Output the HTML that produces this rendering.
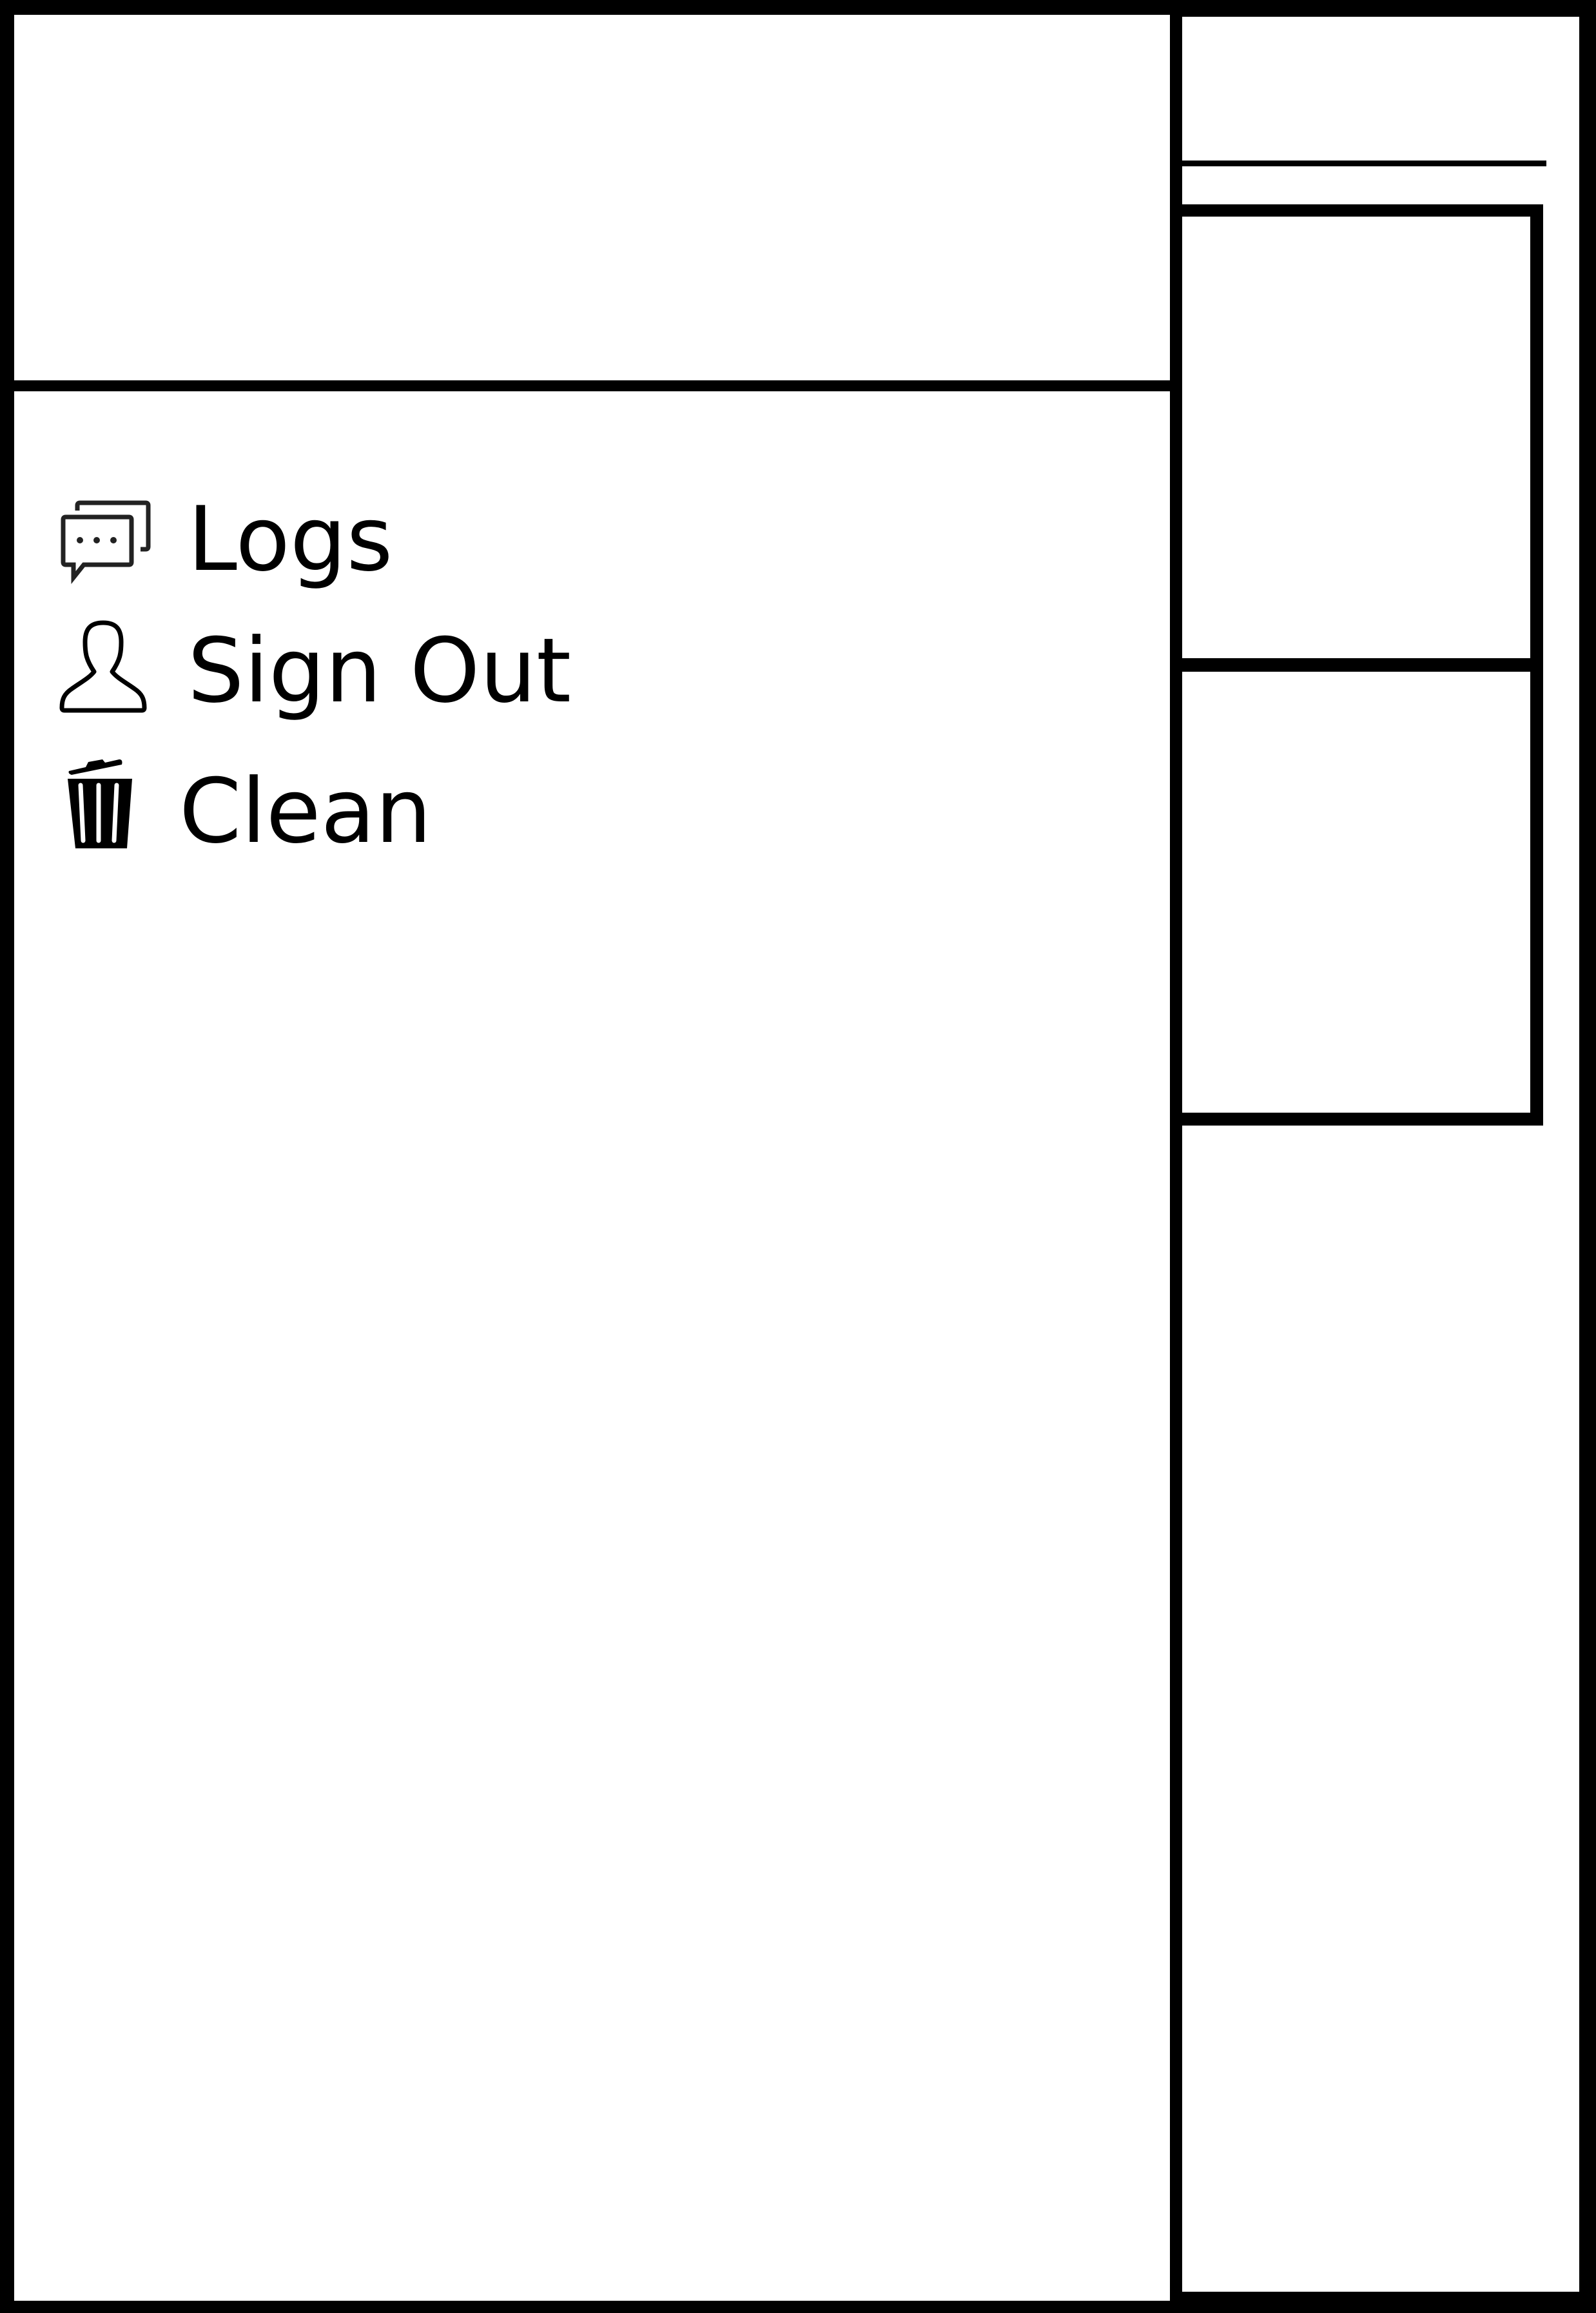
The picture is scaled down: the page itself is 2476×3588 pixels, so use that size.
<!DOCTYPE html>
<html>
<head>
<meta charset="utf-8">
<style>
html,body{margin:0;padding:0;background:#fff;}
body{width:2476px;height:3588px;position:relative;overflow:hidden;font-family:"DejaVu Sans","Liberation Sans",sans-serif;}
.b{position:absolute;background:#000;}
.t{position:absolute;font-size:138px;line-height:1;color:#000;white-space:nowrap;}
svg{position:absolute;}
</style>
</head>
<body>
<div class="b" style="left:0;top:0;width:2476px;height:23px;"></div>
<div class="b" style="left:1834px;top:0;width:642px;height:26px;"></div>
<div class="b" style="left:0;top:0;width:22px;height:3588px;"></div>
<div class="b" style="left:2450px;top:0;width:26px;height:3588px;"></div>
<div class="b" style="left:0;top:3569px;width:1834px;height:19px;"></div>
<div class="b" style="left:1815px;top:3555px;width:661px;height:33px;"></div>
<div class="b" style="left:0;top:590px;width:1834px;height:17px;"></div>
<div class="b" style="left:1815px;top:0;width:19px;height:3588px;"></div>
<div class="b" style="left:1834px;top:249px;width:565px;height:9px;"></div>
<div class="b" style="left:1815px;top:317px;width:579px;height:19px;"></div>
<div class="b" style="left:2374px;top:317px;width:20px;height:1429px;"></div>
<div class="b" style="left:1815px;top:1021px;width:579px;height:21px;"></div>
<div class="b" style="left:1815px;top:1726px;width:579px;height:20px;"></div>

<svg style="left:90px;top:776px" width="146" height="132" viewBox="0 0 146 132">
  <path d="M30 16 V8 q0-4 4-4 H136 q4 0 4 4 V72 q0 4-4 4 H128" fill="none" stroke="#222" stroke-width="7"/>
  <path d="M8 30 q0-4 4-4 H110 q4 0 4 4 V96 q0 4-4 4 H40 L24 120 V100 H12 q-4 0-4-4 Z" fill="none" stroke="#222" stroke-width="7"/>
  <circle cx="34" cy="62" r="5" fill="#222"/>
  <circle cx="60" cy="62" r="5" fill="#222"/>
  <circle cx="86" cy="62" r="5" fill="#222"/>
</svg>
<div class="t" style="left:291px;top:768px;">Logs</div>

<svg style="left:90px;top:962px" width="140" height="144" viewBox="0 0 140 144">
  <path d="M70 4 C50 4 42 14 42 34 C42 52 44 62 56 80 C48 90 36 96 22 106 C10 114 6 122 6 136 Q6 140 10 140 H130 Q134 140 134 136 C134 122 130 114 118 106 C104 96 92 90 84 80 C96 62 98 52 98 34 C98 14 90 4 70 4 Z" fill="none" stroke="#000" stroke-width="7" stroke-linejoin="round"/>
</svg>
<div class="t" style="left:291px;top:972px;">Sign Out</div>

<svg style="left:103px;top:1176px" width="108" height="142" viewBox="0 0 108 142">
  <path d="M4 20 L30 14 L34 6 L56 2 L60 7 L82 2 Q88 2 86 10 L8 26 Q2 24 4 20 Z" fill="#000"/>
  <path d="M2 32 H102 L94 140 H14 Z" fill="#000"/>
  <path d="M22 42 L26 128 M50 42 L50 128 M78 42 L74 128" stroke="#fff" stroke-width="7" stroke-linecap="round"/>
</svg>
<div class="t" style="left:278px;top:1190px;">Clean</div>
</body>
</html>
